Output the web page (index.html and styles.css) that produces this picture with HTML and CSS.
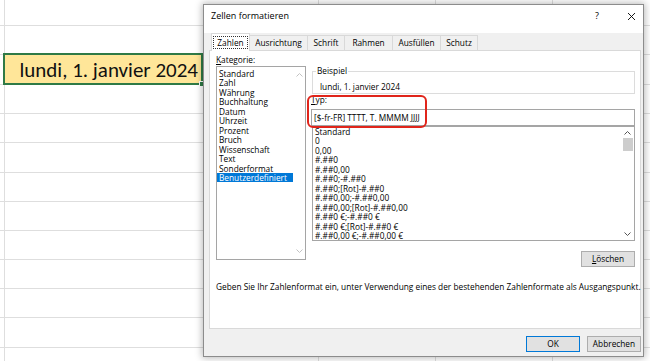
FILE: index.html
```html
<!DOCTYPE html>
<html lang="de">
<head>
<meta charset="utf-8">
<title>Zellen formatieren</title>
<link rel="stylesheet" href="styles.css">
</head>
<body>
<div class="sheet">
  <div class="row h26"></div>
  <div class="row"></div>
  <div class="row h30 sel-row">
    <div class="cell-sel">lundi, 1. janvier 2024<span class="handle"></span></div>
  </div>
  <div class="row"></div>
  <div class="row"></div>
  <div class="row h30"></div>
  <div class="row"></div>
  <div class="row"></div>
  <div class="row"></div>
  <div class="row"></div>
  <div class="row"></div>
  <div class="row h30"></div>
  <div class="row"></div>
</div>

<div class="dialog">
  <div class="titlebar">
    <span class="title">Zellen formatieren</span>
    <span class="tb-help">?</span>
    <svg class="tb-close" width="7" height="7" viewBox="0 0 7 7"><path d="M0 0 L7 7 M7 0 L0 7" stroke="#000" stroke-width="0.9" fill="none"/></svg>
  </div>
  <div class="tabs">
    <div class="tab active tab-zahlen"><span class="focus">Zahlen</span></div>
    <div class="tab tab-ausrichtung">Ausrichtung</div>
    <div class="tab tab-schrift">Schrift</div>
    <div class="tab tab-rahmen">Rahmen</div>
    <div class="tab tab-ausfuellen">Ausfüllen</div>
    <div class="tab tab-schutz">Schutz</div>
  </div>
  <div class="panel">
    <div class="lbl"><u>K</u>ategorie:</div>
    <div class="cols">
      <div class="catlist">
        <ul class="items">
          <li>Standard</li>
          <li>Zahl</li>
          <li>Währung</li>
          <li>Buchhaltung</li>
          <li>Datum</li>
          <li>Uhrzeit</li>
          <li>Prozent</li>
          <li>Bruch</li>
          <li>Wissenschaft</li>
          <li>Text</li>
          <li>Sonderformat</li>
          <li class="selected">Benutzerdefiniert</li>
        </ul>
        <div class="vscroll disabled">
          <span class="arrow"><svg width="7" height="4" viewBox="0 0 7 4"><path d="M0.5 3.5 L3.5 0.5 L6.5 3.5" fill="none" stroke="currentColor"/></svg></span>
          <span class="track"></span>
          <span class="arrow"><svg width="7" height="4" viewBox="0 0 7 4"><path d="M0.5 0.5 L3.5 3.5 L6.5 0.5" fill="none" stroke="currentColor"/></svg></span>
        </div>
      </div>
      <div class="right">
        <fieldset class="sample">
          <legend>Beispiel</legend>
          <div class="sample-val">lundi, 1. janvier 2024</div>
        </fieldset>
        <div class="lbl typ-lbl"><u>T</u>yp:</div>
        <div class="input">[$-fr-FR] TTTT, T. MMMM JJJJ</div>
        <div class="fmtlist">
          <ul class="items">
            <li>Standard</li>
            <li>0</li>
            <li>0,00</li>
            <li>#.##0</li>
            <li>#.##0,00</li>
            <li>#.##0;-#.##0</li>
            <li>#.##0;[Rot]-#.##0</li>
            <li>#.##0,00;-#.##0,00</li>
            <li>#.##0,00;[Rot]-#.##0,00</li>
            <li>#.##0 €;-#.##0 €</li>
            <li>#.##0 €;[Rot]-#.##0 €</li>
            <li>#.##0,00 €;-#.##0,00 €</li>
          </ul>
          <div class="vscroll">
            <span class="arrow up"><svg width="7" height="4" viewBox="0 0 7 4"><path d="M0.5 3.5 L3.5 0.5 L6.5 3.5" fill="none" stroke="currentColor"/></svg></span>
            <span class="thumb"></span>
            <span class="track"></span>
            <span class="arrow down"><svg width="7" height="4" viewBox="0 0 7 4"><path d="M0.5 0.5 L3.5 3.5 L6.5 0.5" fill="none" stroke="currentColor"/></svg></span>
          </div>
        </div>
        <div class="btnrow"><button class="btn"><u>L</u>öschen</button></div>
        <span class="mark"></span>
      </div>
    </div>
    <p class="help">Geben Sie Ihr Zahlenformat ein, unter Verwendung eines der bestehenden Zahlenformate als Ausgangspunkt.</p>
  </div>
  <div class="footer">
    <button class="btn default">OK</button>
    <button class="btn">Abbrechen</button>
  </div>
</div>
</body>
</html>
```

FILE: styles.css
```css
* { box-sizing: border-box; }
html, body { margin: 0; padding: 0; }
body {
  width: 650px;
  height: 361px;
  overflow: hidden;
  background: #fff;
  position: relative;
  font-family: "Segoe UI", "Open Sans", "Noto Sans", sans-serif;
}

/* ---------- spreadsheet ---------- */
.sheet {
  width: 650px;
  height: 361px;
  background-image:
    linear-gradient(#dedede, #dedede),
    linear-gradient(#dedede, #dedede),
    linear-gradient(#dedede, #dedede),
    linear-gradient(#dedede, #dedede);
  background-size: 1px 100%;
  background-position: 4px 0, 318px 0, 435px 0, 552px 0;
  background-repeat: no-repeat;
}
.row {
  height: 29px;
  border-bottom: 1px solid #dedede;
}
.row.h26 { height: 26px; }
.row.h30 { height: 30px; }
.sel-row {
  display: flex;
  padding-left: 3px;
}
.cell-sel {
  position: relative;
  width: 200px;
  height: 32px;
  margin-top: -2px;
  border: 2px solid #2f7a46;
  background: #ffe699;
  display: flex;
  align-items: flex-end;
  justify-content: flex-end;
  padding: 0 3px 3px 0;
  font-family: "Carlito", "Open Sans", sans-serif;
  font-size: 21px;
  line-height: 20px;
  color: #111;
  white-space: nowrap;
}
.handle {
  position: absolute;
  right: -4px;
  bottom: -4px;
  width: 6px;
  height: 6px;
  background: #2f7a46;
  border: 1px solid #fff;
}

/* ---------- dialog ---------- */
.dialog {
  position: absolute;
  left: 203px;
  top: 4px;
  width: 441px;
  height: 353px;
  background: #f0f0f0;
  border: 1px solid #8c8c8c;
  box-shadow: 0 0 7px 1px rgba(0, 0, 0, 0.28);
  display: flex;
  flex-direction: column;
  font-size: 8.3px;
  color: #000;
}
.titlebar {
  height: 28px;
  flex: none;
  background: #fff;
  display: flex;
  align-items: flex-start;
  padding: 6px 0 0 7px;
  line-height: 10px;
}
.title { flex: 1; font-size: 9px; }
.tb-help {
  width: 8px;
  text-align: center;
  font-size: 9px;
  margin-right: 27px;
}
.tb-close { margin: 2px 8px 0 0; }

.tabs {
  height: 17px;
  flex: none;
  display: flex;
  align-items: flex-end;
  padding-left: 7px;
}
.tab {
  height: 15px;
  border: 1px solid #d9d9d9;
  border-bottom: none;
  margin-left: -1px;
  text-align: center;
  line-height: 13px;
  white-space: nowrap;
}
.tab.active {
  position: relative;
  z-index: 1;
  height: 18px;
  margin-bottom: -1px;
  margin-left: 0;
  background: #fff;
  padding-top: 2px;
  line-height: 11px;
}
.focus {
  display: inline-block;
  border: 1px dotted #333;
  padding: 0 3px;
  line-height: 11px;
}
.tab-zahlen { width: 39px; }
.tab-ausrichtung { width: 59px; }
.tab-schrift { width: 38px; }
.tab-rahmen { width: 49px; }
.tab-ausfuellen { width: 49px; }
.tab-schutz { width: 38px; }

.panel {
  height: 279px;
  flex: none;
  margin: 0 2px 0 5px;
  background: #fff;
  border: 1px solid #d9d9d9;
  padding: 4px 0 0 6px;
}
.lbl {
  line-height: 10px;
  margin-bottom: 1px;
}
.cols {
  display: flex;
  align-items: flex-start;
}
.items {
  list-style: none;
  margin: 0;
  padding: 0;
  flex: 1;
  line-height: 9.45px;
  white-space: nowrap;
  overflow: hidden;
}
.catlist {
  width: 90px;
  height: 194px;
  border: 1px solid #a5a5a5;
  display: flex;
}
.catlist .items { padding-top: 2px; }
.catlist li { padding-left: 2px; }
.catlist li.selected {
  background: #0078d7;
  color: #fff;
}
.vscroll {
  width: 12px;
  flex: none;
  display: flex;
  flex-direction: column;
  align-items: center;
  color: #555;
}
.vscroll.disabled { color: #c2c2c2; }
.vscroll .arrow {
  height: 16px;
  width: 100%;
  display: flex;
  align-items: center;
  justify-content: center;
}
.vscroll .track { flex: 1; }

.right {
  position: relative;
  width: 324px;
  margin-left: 5px;
}
.sample {
  margin: 0 0 0 1px;
  padding: 0 0 0 3px;
  min-width: 0;
  border: 1px solid #dcdcdc;
}
.sample legend {
  padding: 0 1px;
  line-height: 10px;
}
.sample-val {
  padding: 4px 0 0 4px;
  line-height: 13px;
}
.typ-lbl {
  margin: 1px 0 4px;
}
.input {
  height: 17px;
  border: 1px solid #a5a5a5;
  padding-left: 2px;
  line-height: 15px;
  white-space: nowrap;
}
.fmtlist {
  height: 115px;
  margin-left: 1px;
  border: 1px solid #a5a5a5;
  display: flex;
}
.fmtlist li { padding-left: 2px; }
.fmtlist .vscroll { width: 13px; }
.fmtlist .vscroll .arrow.up { height: 11px; }
.fmtlist .vscroll .arrow.down { height: 13px; }
.thumb {
  width: 10px;
  height: 13px;
  background: #cdcdcd;
}
.btnrow {
  display: flex;
  justify-content: flex-end;
  margin-top: 10px;
}
.btn {
  width: 54px;
  height: 16px;
  padding: 0;
  background: #e1e1e1;
  border: 1px solid #adadad;
  font-family: inherit;
  font-size: 8.3px;
  line-height: 14px;
  color: #000;
}
.btn.default { border-color: #0078d7; }
.mark {
  position: absolute;
  left: -4px;
  top: 29px;
  width: 120px;
  height: 33px;
  border: 2px solid #e0251b;
  border-radius: 6px;
}
.help {
  margin: 15px 0 0;
  line-height: 10px;
  white-space: nowrap;
}
.footer {
  display: flex;
  justify-content: flex-end;
  gap: 7px;
  padding: 7px 2px 0 0;
}
```
